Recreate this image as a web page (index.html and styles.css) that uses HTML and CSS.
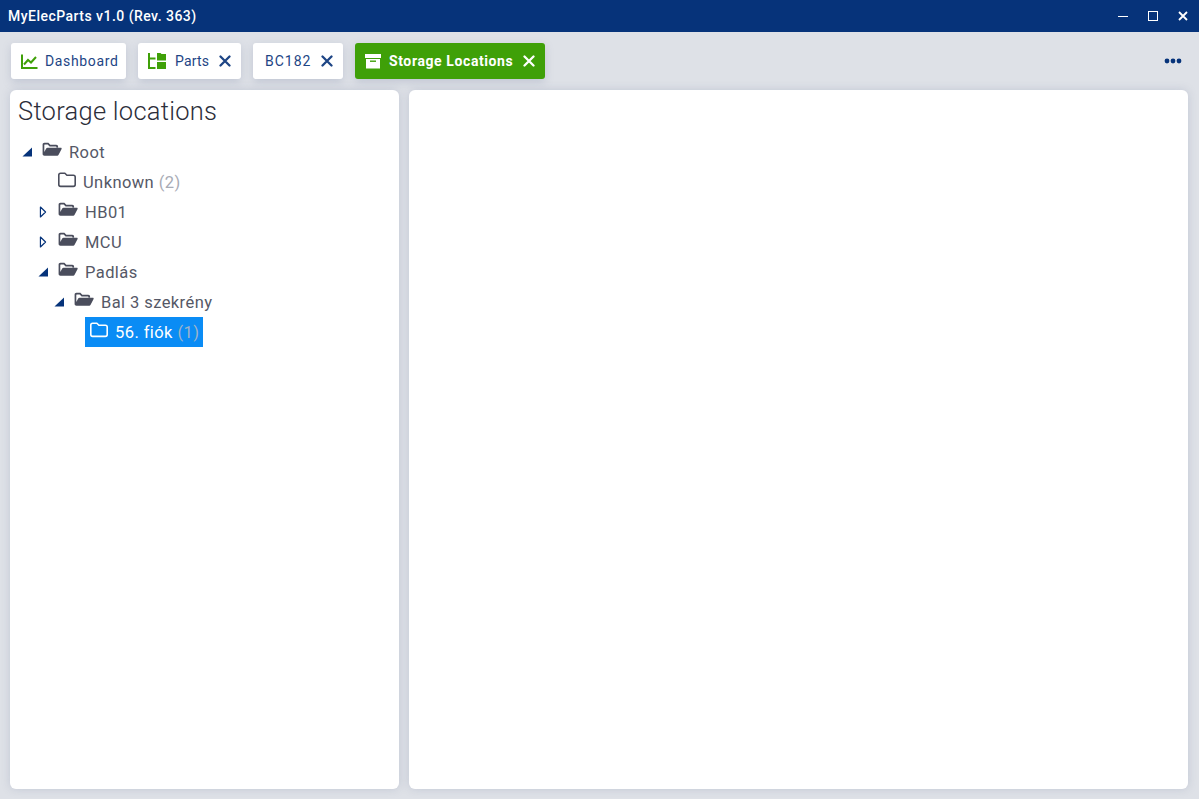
FILE: index.html
```html
<!DOCTYPE html>
<html lang="en">
<head>
<meta charset="utf-8">
<title>MyElecParts</title>
<link rel="stylesheet" href="styles.css">
</head>
<body>
<svg class="defs" width="0" height="0" aria-hidden="true">
  <symbol id="open" viewBox="0 0 20 16"><path d="M0.6 13.5V2.6C0.6 1.6 1.4.8 2.4.8h4l1.9 2h6c1 0 1.8.8 1.8 1.8V5.6h-1.7V5c0-.3-.2-.5-.5-.5H7.6L5.7 2.5H2.8c-.3 0-.5.2-.5.5v7l1.9-3.4c.3-.5.8-.8 1.4-.8h13.2c.7 0 1.1.7.8 1.3l-3 5.7c-.3.5-.8.9-1.4.9H2.4c-1 0-1.8-.7-1.8-1.7z"/></symbol>
  <symbol id="closed" viewBox="0 0 18 16"><path d="M2.6 1.2h4.3l2 2h6.5c1 0 1.8.8 1.8 1.8v7.6c0 1-.8 1.8-1.8 1.8H2.6c-1 0-1.8-.8-1.8-1.8V3c0-1 .8-1.8 1.8-1.8z" fill="none" stroke="currentColor" stroke-width="1.6" stroke-linejoin="round"/></symbol>
  <symbol id="down" viewBox="0 0 10 10"><path d="M10 0.5V9.5H0.5z"/></symbol>
  <symbol id="right" viewBox="0 0 8 14"><path d="M1 1.2L7 7L1 12.8z" fill="none" stroke="currentColor" stroke-width="1.4" stroke-linejoin="round"/></symbol>
  <symbol id="x" viewBox="0 0 12 12"><path d="M1.5 1.5l9 9M10.5 1.5l-9 9" fill="none" stroke="currentColor" stroke-width="2.3" stroke-linecap="round"/></symbol>
</svg>

<header class="titlebar">
  <span class="app-title">MyElecParts v1.0 (Rev. 363)</span>
  <div class="win-controls">
    <svg class="win-btn" width="10" height="10" viewBox="0 0 10 10"><path d="M0 5.5h10" stroke="#fff" stroke-width="1"/></svg>
    <svg class="win-btn" width="10" height="10" viewBox="0 0 10 10"><rect x=".5" y=".5" width="9" height="9" fill="none" stroke="#fff" stroke-width="1"/></svg>
    <svg class="win-btn" width="10" height="10" viewBox="0 0 10 10"><path d="M1 1l8 8M9 1L1 9" stroke="#fff" stroke-width="1.8"/></svg>
  </div>
</header>

<nav class="tabbar">
  <div class="tab tab-dashboard">
    <svg class="tab-icon" width="17" height="15" viewBox="0 0 17 15"><path d="M1 0.5V14H16.5" fill="none" stroke="#3fa008" stroke-width="2"/><path d="M3 10.5L7 6l3 2.5L15 3" fill="none" stroke="#3fa008" stroke-width="2"/></svg>
    <span>Dashboard</span>
  </div>
  <div class="tab tab-parts">
    <svg class="tab-icon" width="18" height="16" viewBox="0 0 18 16"><path d="M1 0v15h6.5M1 5.5h6.5" fill="none" stroke="#3fa008" stroke-width="2"/><path d="M9 0h3.5l1 1H18v6.5H9zM9 9h9v7H9z" fill="#3fa008"/></svg>
    <span>Parts</span>
    <svg class="tab-x"><use href="#x"/></svg>
  </div>
  <div class="tab tab-bc">
    <span>BC182</span>
    <svg class="tab-x"><use href="#x"/></svg>
  </div>
  <div class="tab tab-active">
    <svg class="tab-icon" width="16" height="15" viewBox="0 0 16 15"><path d="M0 0h16v4H0zM1 5h14v9.5H1z" fill="#fff"/><path d="M5 7.2h6" stroke="#3fa008" stroke-width="1.4"/></svg>
    <span>Storage Locations</span>
    <svg class="tab-x"><use href="#x"/></svg>
  </div>
  <svg class="more" width="18" height="6" viewBox="0 0 18 6"><circle cx="3" cy="3" r="2.4"/><circle cx="9" cy="3" r="2.4"/><circle cx="15" cy="3" r="2.4"/></svg>
</nav>

<main class="content">
  <section class="panel panel-tree">
    <h1 class="heading">Storage locations</h1>
    <ul class="tree">
      <li class="row lvl0"><svg class="arrow-down"><use href="#down"/></svg><svg class="folder-open"><use href="#open"/></svg><span class="label">Root</span></li>
      <li class="row lvl1 leaf"><svg class="folder-closed"><use href="#closed"/></svg><span class="label leaf-label">Unknown <span class="count">(2)</span></span></li>
      <li class="row lvl1"><svg class="arrow-right"><use href="#right"/></svg><svg class="folder-open"><use href="#open"/></svg><span class="label">HB01</span></li>
      <li class="row lvl1"><svg class="arrow-right"><use href="#right"/></svg><svg class="folder-open"><use href="#open"/></svg><span class="label">MCU</span></li>
      <li class="row lvl1"><svg class="arrow-down"><use href="#down"/></svg><svg class="folder-open"><use href="#open"/></svg><span class="label">Padlás</span></li>
      <li class="row lvl2"><svg class="arrow-down"><use href="#down"/></svg><svg class="folder-open"><use href="#open"/></svg><span class="label">Bal 3 szekrény</span></li>
      <li class="row lvl3 leaf"><div class="selected"><svg class="folder-closed"><use href="#closed"/></svg><span class="label leaf-label">56. fiók <span class="count">(1)</span></span></div></li>
    </ul>
  </section>
  <section class="panel panel-detail"></section>
</main>
</body>
</html>
```
FILE: styles.css
```css
* { box-sizing: border-box; }
html, body { height: 100%; }
body {
  margin: 0;
  height: 799px;
  overflow: hidden;
  display: flex;
  flex-direction: column;
  background: #dee1e7;
  font-family: "Roboto", "Noto Sans", sans-serif;
  color: #4a4d5c;
  border-right: 1px solid #fff;
}
.defs { position: absolute; }

.titlebar {
  height: 32px;
  flex: none;
  background: #06337a;
  color: #fff;
  display: flex;
  align-items: center;
  justify-content: space-between;
  padding: 0 0 0 8px;
}
.app-title { font-size: 14px; font-weight: 500; letter-spacing: .47px; }
.win-controls { display: flex; align-items: center; gap: 20px; padding-right: 11px; margin-top: -1px; }

.tabbar {
  flex: none;
  height: 58px;
  display: flex;
  align-items: flex-start;
  padding: 11px 17px 0 11px;
  gap: 12px;
}
.tab {
  height: 36px;
  background: #fff;
  border-radius: 3px;
  display: flex;
  align-items: center;
  color: #1e4585;
  font-size: 14px;
  box-shadow: 0 3px 8px rgba(120,130,160,.28);
  letter-spacing: .2px;
}
.tab-dashboard { width: 115px; padding-left: 10px; letter-spacing: .65px; }
.tab-dashboard .tab-icon { margin-right: 7px; }
.tab-parts { width: 103px; padding-left: 10px; }
.tab-parts .tab-icon { margin-right: 9px; margin-top: -1px; }
.tab-parts .tab-x { margin-left: 10px; }
.tab-bc { width: 90px; padding-left: 12px; letter-spacing: 1px; }
.tab-bc .tab-x { margin-left: 10px; }
.tab-active {
  width: 190px;
  padding-left: 10px;
  background: #3fa008;
  color: #fff;
  font-weight: 700;
  letter-spacing: .6px;
}
.tab-active .tab-icon { margin-right: 8px; }
.tab-active .tab-x { margin-left: 10px; }
.tab-x { width: 12px; height: 12px; flex: none; }
.more { margin-left: auto; margin-top: 15px; fill: #06337a; }

.content {
  flex: 1;
  display: flex;
  gap: 10px;
  padding: 0 11px 10px 10px;
  min-height: 0;
}
.panel {
  background: #fff;
  border-radius: 6px;
  box-shadow: 0 0 8px rgba(130,140,170,.3);
}
.panel-tree { width: 389px; flex: none; padding: 6px 8px; }
.panel-detail { flex: 1; }

.heading {
  margin: 0;
  font-size: 25.5px;
  font-weight: 300;
  line-height: 31px;
  color: #2c2e3a;
  letter-spacing: .27px;
}
.tree { list-style: none; margin: 10px 0 0; padding: 0; }
.row {
  height: 30px;
  display: flex;
  align-items: center;
  font-size: 16.5px;
  letter-spacing: .42px;
  color: #555866;
}
.lvl0 { padding-left: 4px; }
.lvl1 { padding-left: 20px; }
.lvl2 { padding-left: 36px; }
.lvl3 { padding-left: 67px; }
.leaf.lvl1 { padding-left: 40px; }

.arrow-down { width: 10px; height: 10px; flex: none; fill: #06337a; margin-right: 10px; }
.arrow-right { width: 8px; height: 12px; flex: none; color: #06337a; margin-left: 1px; margin-right: 11px; }
.folder-open { width: 20px; height: 16px; flex: none; fill: #4a4d5c; margin-right: 7px; margin-top: -4px; }
.folder-closed { width: 18px; height: 16px; flex: none; color: #4a4d5c; margin-right: 7px; margin-top: -4px; }
.lvl3 .folder-closed { color: #fff; margin-right: 7px; }
.count { color: #a8abb5; }
.selected {
  height: 30px;
  width: 118px;
  background: #0a8cf5;
  color: #fff;
  display: flex;
  align-items: center;
  padding-left: 5px;
}
.selected .count { color: #9fb4c9; }
```
